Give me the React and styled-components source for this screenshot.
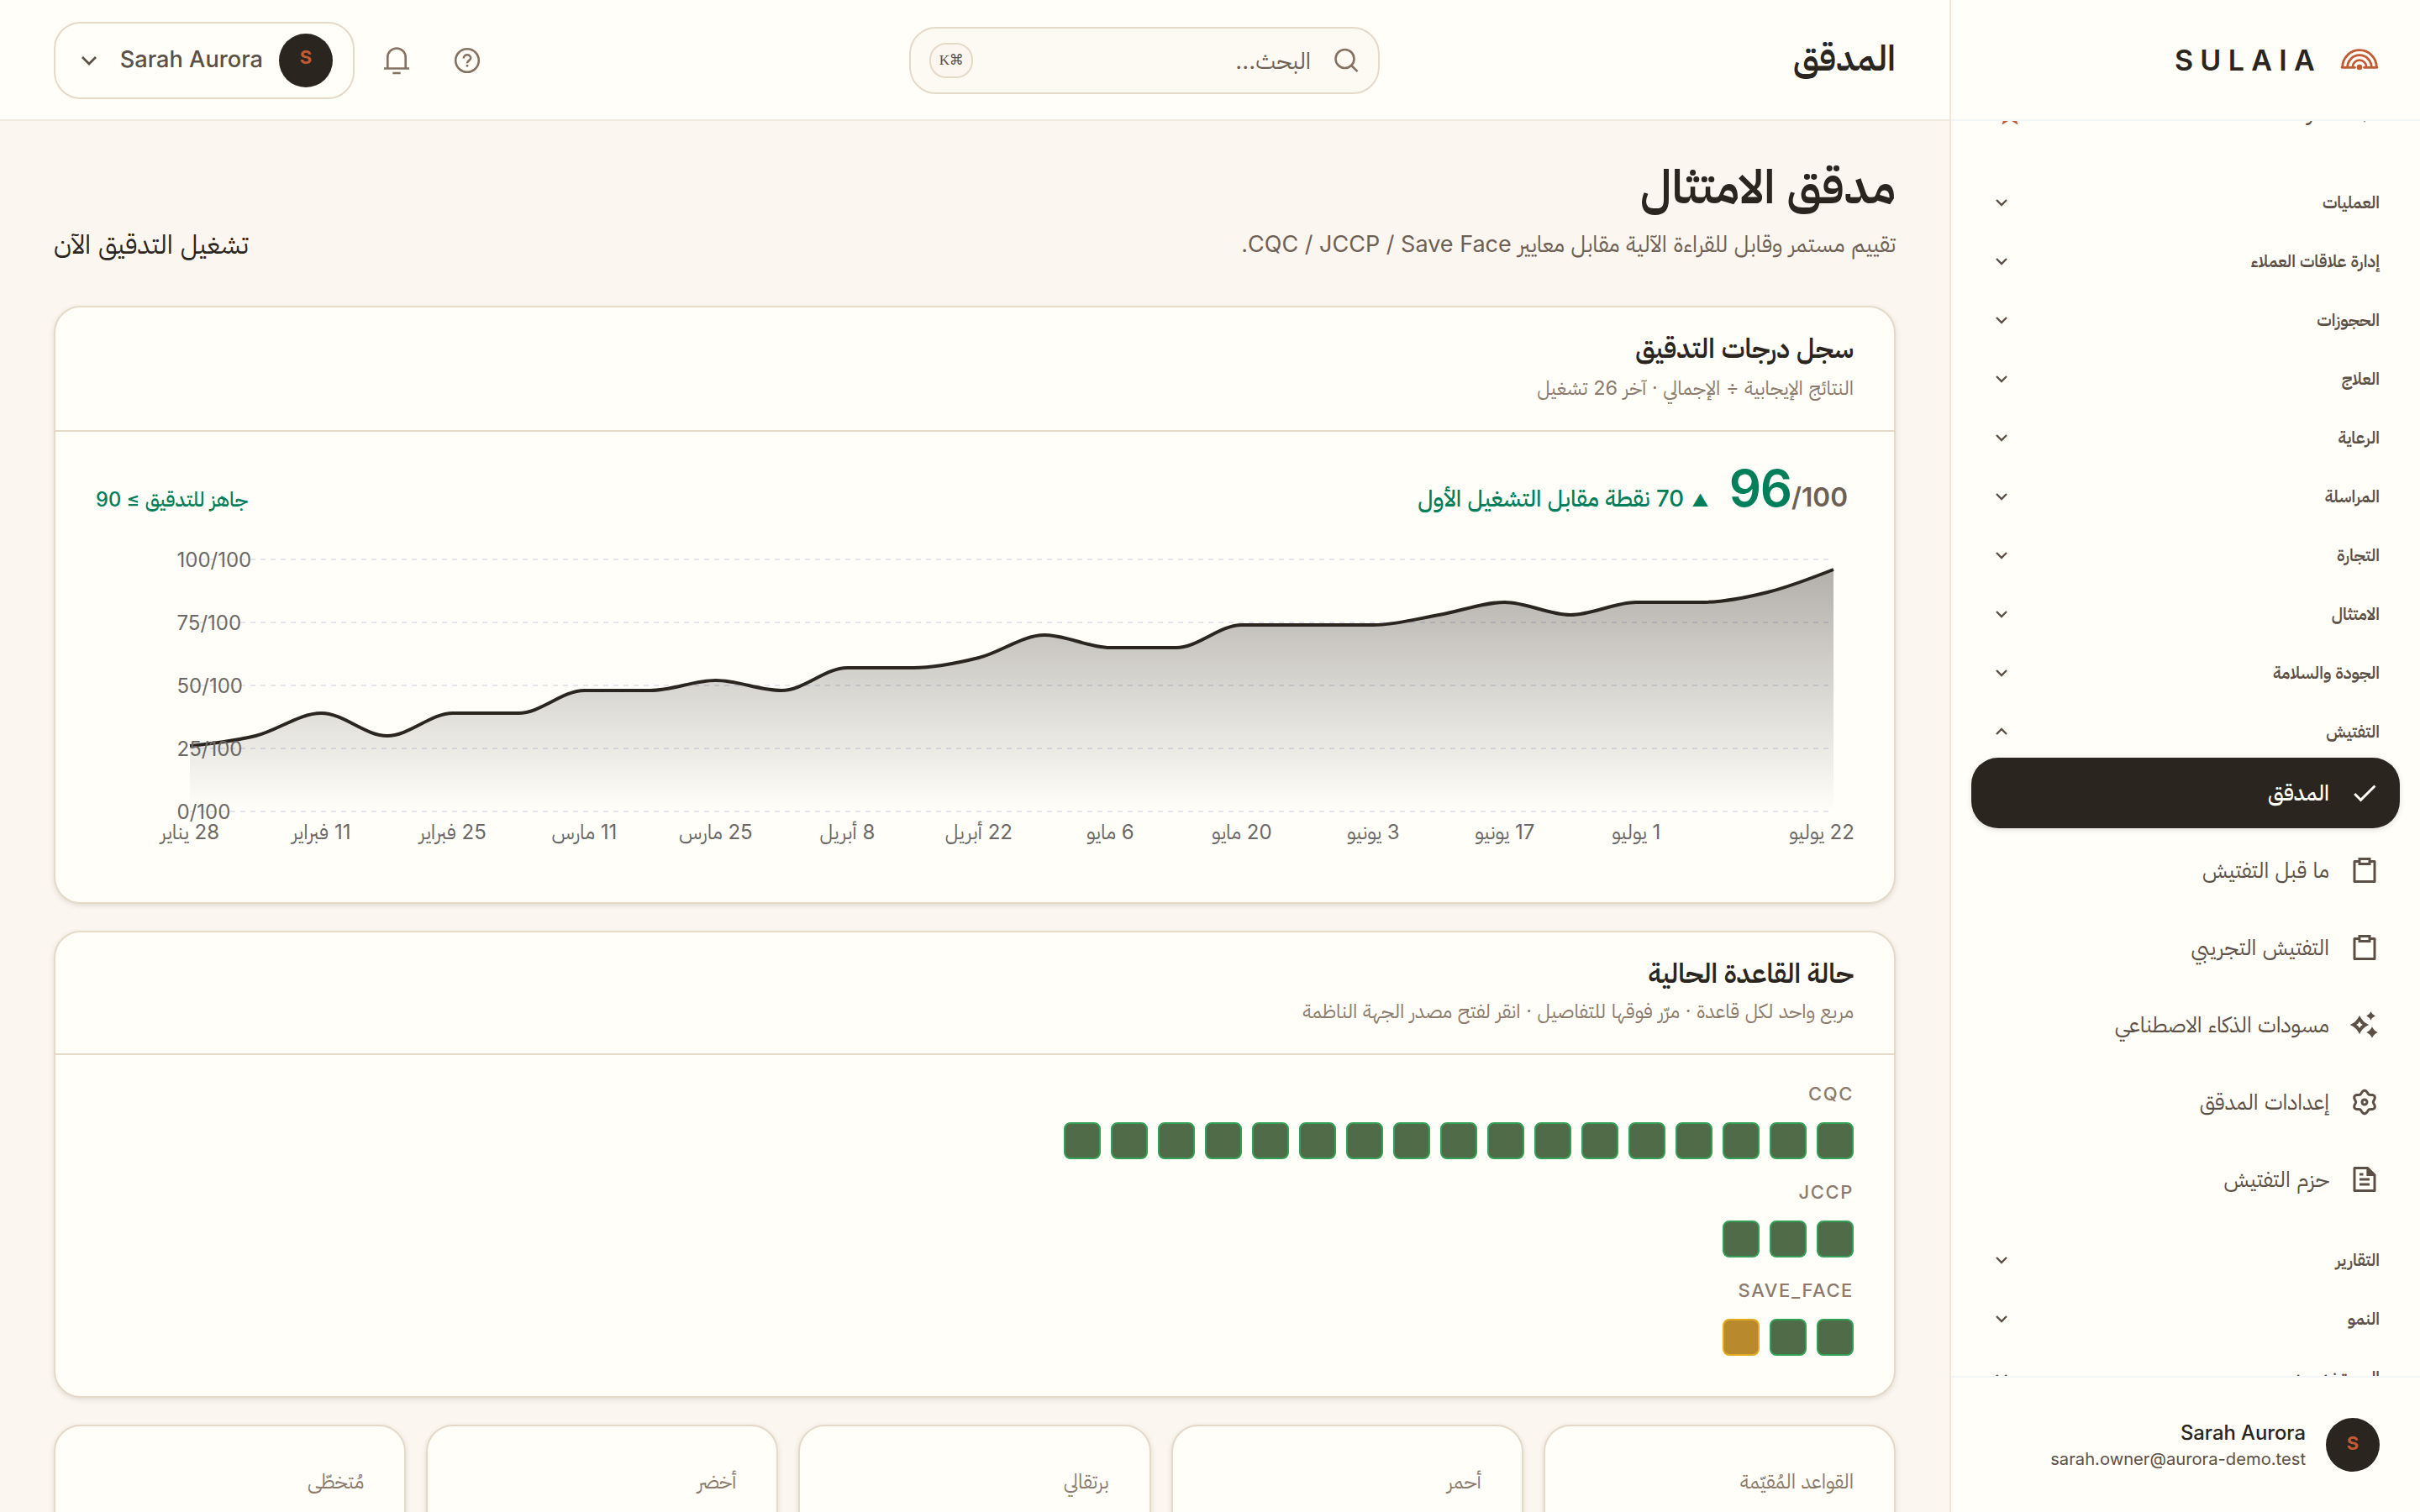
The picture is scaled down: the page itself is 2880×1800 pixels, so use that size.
import React from 'react';
import styled, { createGlobalStyle } from 'styled-components';

const c = {
  page: '#fbf6ef',
  surface: '#fffef9',
  field: '#fdfaf4',
  ink: '#2b2520',
  text: '#5c5046',
  muted: '#6e6054',
  faint: '#8c7b6c',
  icon: '#857262',
  border: '#e5d9c8',
  hairline: '#efe7da',
  cool: '#f1f5f7',
  accent: '#c25a33',
  green: '#007f5a',
};

const GlobalStyle = createGlobalStyle`
  * { box-sizing: border-box; }
  html, body { margin: 0; padding: 0; }
  body {
    background: ${c.page};
    color: ${c.ink};
    font-family: Inter, "IBM Plex Sans Arabic", "Noto Sans Arabic", sans-serif;
    overflow: hidden;
  }
  svg { display: block; flex: none; }
`;

const Shell = styled.div`
  display: grid;
  grid-template-columns: 560px 2320px;
  width: 2880px;
  height: 1800px;
  overflow: hidden;
  white-space: nowrap;
`;

/* ---------- sidebar ---------- */

const Sidebar = styled.aside`
  display: flex;
  flex-direction: column;
  height: 1800px;
  background: ${c.surface};
  border-left: 2px solid ${c.hairline};
`;

const Brand = styled.div`
  display: flex;
  align-items: center;
  gap: 22px;
  height: 144px;
  flex: none;
  padding-right: 49px;
  border-bottom: 2px solid ${c.cool};
`;

const Wordmark = styled.span`
  direction: ltr;
  padding-top: 1px;
  font-size: 34px;
  line-height: 44px;
  font-weight: 600;
  letter-spacing: 8.3px;
`;

const Nav = styled.nav`
  display: flex;
  flex-direction: column;
  flex: 1;
  min-height: 0;
  overflow: hidden;
  gap: 8px;
  padding: 0 24px;
`;

const Pinned = styled.div`
  display: flex;
  align-items: center;
  gap: 24px;
  flex: none;
  height: 84px;
  margin: -52px 0 26px;
  padding: 0 24px 0 34px;
  color: ${c.text};
  font-size: 26px;
`;

const PinnedLabel = styled.span`
  flex: 1;
`;

const Section = styled.div`
  display: flex;
  align-items: center;
  justify-content: space-between;
  flex: none;
  height: 62px;
  padding: 0 24px 0 20px;
  color: ${c.text};
  font-size: 20px;
  font-weight: 600;
  line-height: 30px;
`;

const Items = styled.div`
  display: flex;
  flex-direction: column;
  flex: none;
  gap: 8px;
  margin: -8px 0 15px;
`;

const Item = styled.div`
  display: flex;
  align-items: center;
  gap: 24px;
  height: 84px;
  padding: 0 24px;
  border-radius: 32px;
  font-size: 25.8px;
  line-height: 40px;
  font-weight: ${(p) => (p.$active ? 500 : 400)};
  color: ${(p) => (p.$active ? c.surface : c.text)};
  background: ${(p) => (p.$active ? c.ink : 'transparent')};
  box-shadow: ${(p) => (p.$active ? '0 2px 6px rgba(43, 37, 32, 0.14)' : 'none')};
`;

const Account = styled.div`
  display: flex;
  gap: 24px;
  flex: none;
  height: 162px;
  padding: 48px 48px 0 0;
  border-top: 2px solid ${c.cool};
`;

const AccountText = styled.div`
  display: flex;
  flex-direction: column;
  align-items: flex-start;
  padding-top: 2px;
`;

const AccountName = styled.span`
  font-size: 23.8px;
  font-weight: 500;
  line-height: 32px;
`;

const AccountMail = styled.span`
  color: ${c.text};
  font-size: 20.2px;
  line-height: 30px;
`;

const Avatar = styled.span`
  display: flex;
  justify-content: center;
  flex: none;
  width: 64px;
  height: 64px;
  border-radius: 50%;
  background: ${c.ink};
  color: ${c.accent};
  font-size: 22px;
  font-weight: 700;
  line-height: ${(p) => p.$line}px;
`;

/* ---------- header ---------- */

const Main = styled.main`
  display: flex;
  flex-direction: column;
  height: 1800px;
  overflow: hidden;
`;

const Header = styled.header`
  display: grid;
  grid-template-columns: 614px 560px 1fr;
  align-items: center;
  flex: none;
  height: 144px;
  padding: 0 64px;
  background: ${c.surface};
  border-bottom: 2px solid #efe9dd;
`;

const HeaderTitle = styled.div`
  font-size: 42px;
  font-weight: 600;
  line-height: 60px;
  padding-bottom: 4px;
`;

const Search = styled.div`
  display: flex;
  align-items: center;
  height: 80px;
  margin-top: 2px;
  padding: 0 22px 0 22px;
  border: 2px solid ${c.border};
  border-radius: 32px;
  background: ${c.field};
`;

const SearchText = styled.span`
  flex: 1;
  padding-right: 28px;
  color: ${c.muted};
  font-size: 27.6px;
  line-height: 40px;
`;

const Key = styled.kbd`
  display: flex;
  align-items: center;
  justify-content: center;
  width: 52px;
  height: 42px;
  border: 2px solid ${c.border};
  border-radius: 20px;
  background: ${c.page};
  color: ${c.text};
  font-family: "Liberation Serif", "DejaVu Sans", serif;
  font-size: 17px;
  line-height: 24px;
  letter-spacing: -0.5px;
`;

const Actions = styled.div`
  display: flex;
  align-items: center;
  justify-content: flex-end;
  gap: 16px;
  padding-top: 2px;
`;

const IconButton = styled.span`
  display: flex;
  align-items: center;
  justify-content: center;
  width: 68px;
  height: 68px;
  color: ${c.icon};
`;

const UserPill = styled.div`
  display: flex;
  align-items: center;
  gap: 19px;
  width: 358px;
  height: 92px;
  padding: 0 24px;
  border: 2px solid ${c.border};
  border-radius: 32px;
  color: ${c.text};
`;

const UserName = styled.span`
  flex: 1;
  font-size: 27.2px;
  font-weight: 500;
  line-height: 40px;
  padding-bottom: 2px;
`;

/* ---------- page ---------- */

const Page = styled.div`
  display: flex;
  flex-direction: column;
  gap: 32px;
  padding: 43px 64px 0;
`;

const PageHead = styled.div`
  display: flex;
  align-items: flex-end;
  justify-content: space-between;
  height: 126px;
  margin-bottom: 19px;
`;

const PageTitle = styled.h1`
  margin: 0 0 12px;
  font-size: 56px;
  font-weight: 600;
  line-height: 70px;
`;

const PageSub = styled.p`
  margin: 0;
  color: ${c.muted};
  font-size: 27px;
  line-height: 44px;
`;

const RunButton = styled.span`
  font-size: 31.6px;
  line-height: 44px;
`;

const Card = styled.section`
  display: flex;
  flex-direction: column;
  flex: none;
  height: ${(p) => p.$height}px;
  border: 2px solid ${c.border};
  border-radius: 32px;
  background: ${c.surface};
  box-shadow: 0 2px 6px rgba(43, 37, 32, 0.13);
`;

const CardHead = styled.div`
  display: flex;
  flex-direction: column;
  flex: none;
  gap: 4px;
  height: ${(p) => (p.$tall ? 148 : 146)}px;
  padding: 27px 48px 0;
  border-bottom: 2px solid ${c.border};
`;

const CardTitle = styled.h2`
  margin: 0;
  font-size: 31.8px;
  font-weight: 600;
  line-height: 44px;
`;

const CardSub = styled.p`
  margin: 0;
  color: ${c.faint};
  font-size: 23.5px;
  line-height: ${(p) => (p.$tall ? 42 : 37)}px;
`;

const CardBody = styled.div`
  display: flex;
  flex-direction: column;
  padding: 30px 48px 0;
`;

const ScoreRow = styled.div`
  display: flex;
  align-items: baseline;
  height: 72px;
  margin-bottom: 14px;
  padding-right: 7px;
  color: ${c.green};
`;

const Score = styled.span`
  direction: ltr;
  font-size: 60px;
  font-weight: 600;
  line-height: 74px;
  letter-spacing: -1.2px;
`;

const ScoreMax = styled.span`
  color: ${c.muted};
  font-size: 31.6px;
  font-weight: 600;
  letter-spacing: 0;
`;

const Delta = styled.span`
  display: flex;
  align-items: baseline;
  flex: 1;
  gap: 9px;
  padding-right: 24px;
  font-size: 27.6px;
  font-weight: 500;
`;

const DeltaMark = styled.span`
  font-size: 20px;
`;

const Ready = styled.span`
  font-size: 23.7px;
  font-weight: 500;
`;

const Rules = styled.div`
  display: flex;
  flex-direction: column;
  gap: 22px;
  padding: 29px 48px 0;
`;

const RuleGroup = styled.div`
  display: flex;
  flex-direction: column;
  gap: 17px;
`;

const RuleLabel = styled.span`
  color: ${c.faint};
  font-size: 22px;
  font-weight: 500;
  line-height: 34px;
  letter-spacing: 1.6px;
`;

const Squares = styled.div`
  display: flex;
  gap: 12px;
`;

const Square = styled.span`
  width: 44px;
  height: 44px;
  border: 2px solid ${(p) => (p.$amber ? '#e2ab22' : '#33a056')};
  border-radius: 8px;
  background: ${(p) => (p.$amber ? '#b98a2d' : '#506b47')};
`;

const Stats = styled.div`
  display: grid;
  grid-template-columns: repeat(5, 1fr);
  gap: 24px;
`;

const StatLabel = styled.span`
  padding: 48px 48px 0;
  color: ${c.faint};
  font-size: 23.8px;
  line-height: 36px;
`;

const ChartSvg = styled.svg`
  direction: ltr;
`;

/* ---------- icons ---------- */

const Chevron = ({ w = 12, up, stroke = 2.6 }) => (
  <svg width="32" height="32" viewBox="-16 -16 32 32" fill="none" stroke="currentColor" strokeWidth={stroke}>
    <path d={up ? `M${-w / 2} ${w / 4}L0 ${-w / 4}L${w / 2} ${w / 4}` : `M${-w / 2} ${-w / 4}L0 ${w / 4}L${w / 2} ${-w / 4}`} />
  </svg>
);

const Logo = () => (
  <svg width="46" height="28" viewBox="-23 -23 46 28" fill="none" stroke={c.accent} strokeWidth="2.8">
    <path d="M-20.3 0a20.3 20.3 0 0 1 40.6 0" />
    <path d="M-14.3 0a14.3 14.3 0 0 1 28.6 0" />
    <path d="M-8.3 0a8.3 8.3 0 0 1 16.6 0" />
    <path d="M-21 .3H-5.5M5.5 .3H21" strokeLinecap="round" />
    <circle cx="0" cy="0" r="3.3" fill={c.accent} stroke="none" />
  </svg>
);

const Glyph = ({ children }) => (
  <svg width="36" height="36" viewBox="0 0 24 24" fill="currentColor">
    {children}
  </svg>
);

const gearPath = Array.from({ length: 121 }, (_, i) => {
  const a = (i / 120) * Math.PI * 2;
  const r = 8.05 + 1.15 * Math.cos(6 * (a - Math.PI / 2));
  return `${i ? 'L' : 'M'}${(12 + r * Math.cos(a)).toFixed(2)} ${(12 + r * Math.sin(a)).toFixed(2)}`;
}).join('') + 'Z';

const star = (x, y, r) => {
  const k = r * 0.3;
  return `M${x} ${y - r}Q${x + k} ${y - k} ${x + r} ${y}Q${x + k} ${y + k} ${x} ${y + r}Q${x - k} ${y + k} ${x - r} ${y}Q${x - k} ${y - k} ${x} ${y - r}Z`;
};

const icons = {
  check: <path d="M9 16.17L4.83 12l-1.42 1.41L9 19 21 7l-1.41-1.41z" />,
  clipboard: (
    <g fill="none" stroke="currentColor" strokeWidth="2">
      <path d="M8 5H4v16h16V5h-4" strokeLinejoin="round" />
      <path d="M8 3h8v4H8z" />
    </g>
  ),
  sparkle: (
    <path
      fillRule="evenodd"
      d={`${star(8, 12, 7.5)}M8 9.4L9 11L10.6 12L9 13L8 14.6L7 13L5.4 12L7 11Z${star(17, 5, 3.5)}${star(18, 18, 4.5)}`}
    />
  ),
  gear: (
    <g fill="none" stroke="currentColor" strokeWidth="2">
      <path d={gearPath} strokeLinejoin="round" />
      <circle cx="12" cy="12" r="2" />
    </g>
  ),
  doc: (
    <g>
      <path d="M4 3h10.5L20 8.5V21H4z" fill="none" stroke="currentColor" strokeWidth="2" strokeLinejoin="round" />
      <path d="M13.6 2.5L21 9.4h-7.4z" />
      <path d="M8 7h3v2H8zM8 11h8v2H8zM8 15h8v2H8z" />
    </g>
  ),
  pin: <path d="M12 2l5 9 3 3-6 1-2 5-2-5-6-1 3-3z" />,
};

const Bell = () => (
  <svg width="32" height="34" viewBox="0 0 32 34" fill="none" stroke="currentColor" strokeWidth="2.7">
    <path d="M5.3 26V13.2a10.7 10.7 0 0 1 21.4 0V26" />
    <path d="M1 26.5h30M11.3 32h9.4" />
  </svg>
);

const Help = () => (
  <svg width="32" height="32" viewBox="0 0 32 32" fill="none" stroke="currentColor" strokeWidth="2.6">
    <circle cx="16" cy="16" r="13.8" />
    <path d="M11.8 13.4v-.3a4.2 3.9 0 0 1 8.4 0c0 3-4.2 3.1-4.2 6.1" />
    <path d="M16 21v2.6" />
  </svg>
);

const SearchIcon = () => (
  <svg width="30" height="30" viewBox="0 0 30 30" fill="none" stroke={c.icon} strokeWidth="2.6">
    <circle cx="12.5" cy="13" r="11" />
    <path d="M20.3 21l7.2 7.2" />
  </svg>
);

const StarMark = () => (
  <svg width="24" height="28" viewBox="0 -2 24 28" fill="none" stroke={c.accent} strokeWidth="2.6">
    <path d="M12 2.5l2.8 6.2 6.7.7-5 5 2.9 9.4-7.4-4.4-7.4 4.4 2.9-9.4-5-5 6.7-.7z" />
  </svg>
);

/* ---------- chart ---------- */

const scores = [26, 30, 39, 30, 39, 39, 48, 48, 52, 48, 57, 57, 61, 70, 65, 65, 74, 74, 74, 78, 83, 78, 83, 83, 87, 96];
const ticks = ['28 يناير', '11 فبراير', '25 فبراير', '11 مارس', '25 مارس', '8 أبريل', '22 أبريل', '6 مايو', '20 مايو', '3 يونيو', '17 يونيو', '1 يوليو'];

const X0 = 112;
const X1 = 2068;
const STEP = (X1 - X0) / (scores.length - 1);
const toX = (i) => X0 + i * STEP;
const toY = (v) => 336 - v * 3;

function monotonePath(values) {
  const ys = values.map(toY);
  const n = ys.length;
  const d = ys.slice(1).map((y, i) => (y - ys[i]) / STEP);
  const m = ys.map((_, i) => {
    if (i === 0 || i === n - 1) return null;
    const a = d[i - 1];
    const b = d[i];
    if (a * b <= 0) return 0;
    return Math.sign(a) * 2 * Math.min(Math.abs(a), Math.abs(b), 0.25 * Math.abs(a + b));
  });
  m[0] = (3 * d[0] - m[1]) / 2;
  m[n - 1] = (3 * d[n - 2] - m[n - 2]) / 2;
  let p = `M${toX(0)} ${ys[0]}`;
  for (let i = 1; i < n; i++) {
    const h = STEP / 3;
    p += `C${toX(i - 1) + h} ${ys[i - 1] + m[i - 1] * h} ${toX(i) - h} ${ys[i] - m[i] * h} ${toX(i)} ${ys[i]}`;
  }
  return p;
}

const ScoreChart = () => {
  const line = monotonePath(scores);
  return (
    <ChartSvg width="2092" height="396" viewBox="0 0 2092 396" overflow="visible">
      <defs>
        <linearGradient id="scoreFill" x1="0" y1="0" x2="0" y2="1">
          <stop offset="0" stopColor={c.ink} stopOpacity="0.36" />
          <stop offset="1" stopColor={c.ink} stopOpacity="0" />
        </linearGradient>
      </defs>
      {[0, 25, 50, 75, 100].map((v) => (
        <path key={v} d={`M${X0} ${toY(v)}H${X1}`} stroke="#e4e4ec" strokeWidth="2" strokeDasharray="6 6" />
      ))}
      <path d={`${line}L${X1} 336L${X0} 336Z`} fill="url(#scoreFill)" />
      <path d={line} fill="none" stroke={c.ink} strokeWidth="4" />
      <g fill="#6b6865" fontSize="24">
        {[0, 25, 50, 75, 100].map((v) => (
          <text key={v} x="96.5" y={toY(v) + 9}>{`${v}/100`}</text>
        ))}
        {ticks.map((t, i) => (
          <text key={t} x={toX(i * 2)} y="369" textAnchor="middle" direction="rtl">{t}</text>
        ))}
        <text x="2054" y="369" textAnchor="middle" direction="rtl">22 يوليو</text>
      </g>
    </ChartSvg>
  );
};

/* ---------- data ---------- */

const sectionsBefore = ['العمليات', 'إدارة علاقات العملاء', 'الحجوزات', 'العلاج', 'الرعاية', 'المراسلة', 'التجارة', 'الامتثال', 'الجودة والسلامة'];
const sectionsAfter = ['التقارير', 'النمو', 'المستخدمون'];
const items = [
  ['check', 'المدقق'],
  ['clipboard', 'ما قبل التفتيش'],
  ['clipboard', 'التفتيش التجريبي'],
  ['sparkle', 'مسودات الذكاء الاصطناعي'],
  ['gear', 'إعدادات المدقق'],
  ['doc', 'حزم التفتيش'],
];
const rules = [
  ['CQC', 17, 0],
  ['JCCP', 3, 0],
  ['SAVE_FACE', 2, 1],
];
const stats = ['القواعد المُقيّمة', 'أحمر', 'برتقالي', 'أخضر', 'مُتخطّى'];

const SectionRow = ({ label, open }) => (
  <Section>
    {label}
    <Chevron up={open} stroke={2.4} />
  </Section>
);

export default function App() {
  return (
    <>
      <GlobalStyle />
      <Shell dir="rtl" lang="ar">
        <Sidebar>
          <Brand>
            <Logo />
            <Wordmark>SULAIA</Wordmark>
          </Brand>
          <Nav>
            <Pinned>
              <Glyph>{icons.pin}</Glyph>
              <PinnedLabel>الأرشفة</PinnedLabel>
              <StarMark />
            </Pinned>
            {sectionsBefore.map((s) => (
              <SectionRow key={s} label={s} />
            ))}
            <SectionRow label="التفتيش" open />
            <Items>
              {items.map(([icon, label], i) => (
                <Item key={label} $active={i === 0}>
                  <Glyph>{icons[icon]}</Glyph>
                  {label}
                </Item>
              ))}
            </Items>
            {sectionsAfter.map((s) => (
              <SectionRow key={s} label={s} />
            ))}
          </Nav>
          <Account>
            <Avatar $line={61}>S</Avatar>
            <AccountText>
              <AccountName>Sarah Aurora</AccountName>
              <AccountMail>sarah.owner@aurora-demo.test</AccountMail>
            </AccountText>
          </Account>
        </Sidebar>

        <Main>
          <Header>
            <HeaderTitle>المدقق</HeaderTitle>
            <Search>
              <SearchIcon />
              <SearchText>البحث...</SearchText>
              <Key>⌘K</Key>
            </Search>
            <Actions>
              <IconButton><Help /></IconButton>
              <IconButton><Bell /></IconButton>
              <UserPill>
                <Avatar $line={57}>S</Avatar>
                <UserName>Sarah Aurora</UserName>
                <Chevron w={16} stroke={2.7} />
              </UserPill>
            </Actions>
          </Header>

          <Page>
            <PageHead>
              <div>
                <PageTitle>مدقق الامتثال</PageTitle>
                <PageSub>تقييم مستمر وقابل للقراءة الآلية مقابل معايير CQC / JCCP / Save Face.</PageSub>
              </div>
              <RunButton>تشغيل التدقيق الآن</RunButton>
            </PageHead>

            <Card $height={712}>
              <CardHead $tall>
                <CardTitle>سجل درجات التدقيق</CardTitle>
                <CardSub $tall>النتائج الإيجابية ÷ الإجمالي · آخر 26 تشغيل</CardSub>
              </CardHead>
              <CardBody>
                <ScoreRow>
                  <Score>96<ScoreMax>/100</ScoreMax></Score>
                  <Delta>
                    <DeltaMark>▲</DeltaMark>
                    <span>70 نقطة مقابل التشغيل الأول</span>
                  </Delta>
                  <Ready>جاهز للتدقيق ≥ 90</Ready>
                </ScoreRow>
                <ScoreChart />
              </CardBody>
            </Card>

            <Card $height={556}>
              <CardHead>
                <CardTitle>حالة القاعدة الحالية</CardTitle>
                <CardSub>مربع واحد لكل قاعدة · مرّر فوقها للتفاصيل · انقر لفتح مصدر الجهة الناظمة</CardSub>
              </CardHead>
              <Rules>
                {rules.map(([label, green, amber]) => (
                  <RuleGroup key={label}>
                    <RuleLabel>{label}</RuleLabel>
                    <Squares>
                      {Array.from({ length: green + amber }, (_, i) => (
                        <Square key={i} $amber={i >= green} />
                      ))}
                    </Squares>
                  </RuleGroup>
                ))}
              </Rules>
            </Card>

            <Stats>
              {stats.map((s) => (
                <Card key={s} $height={220}>
                  <StatLabel>{s}</StatLabel>
                </Card>
              ))}
            </Stats>
          </Page>
        </Main>
      </Shell>
    </>
  );
}
